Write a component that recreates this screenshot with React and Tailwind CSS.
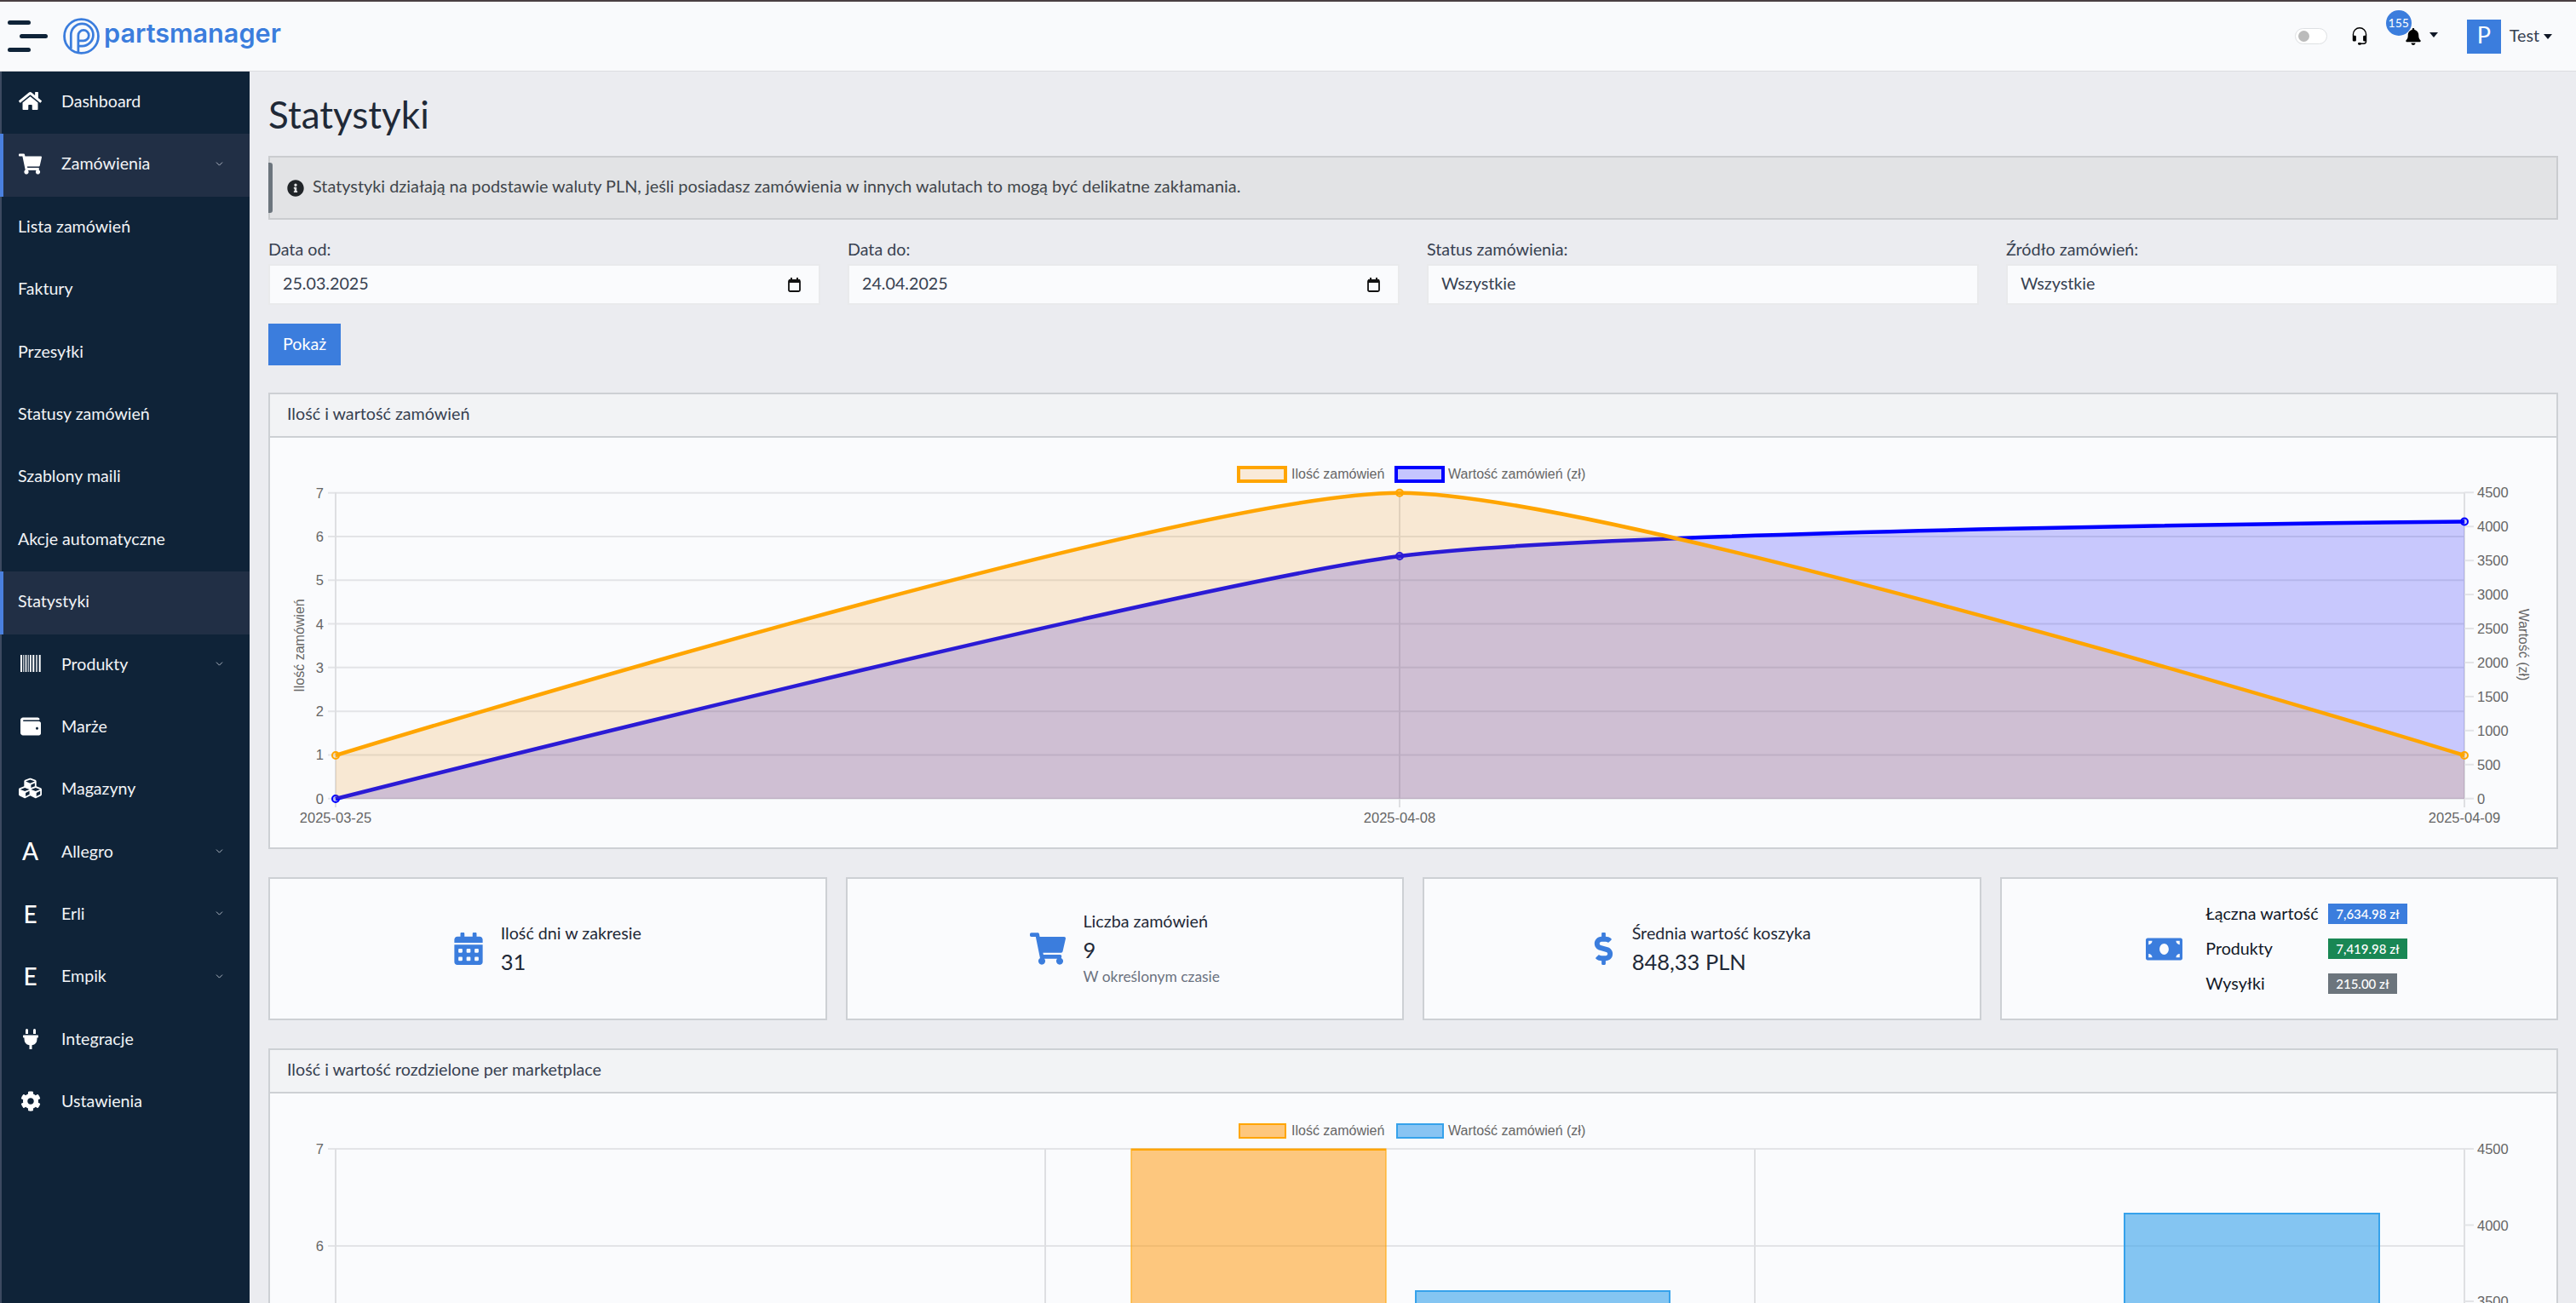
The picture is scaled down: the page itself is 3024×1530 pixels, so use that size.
import { ChevronDown } from "lucide-react";
import { BsHeadset } from "react-icons/bs";
import {
  FaBell,
  FaCalendarAlt,
  FaCog,
  FaCubes,
  FaDollarSign,
  FaHome,
  FaInfoCircle,
  FaMoneyBill,
  FaPlug,
  FaShoppingCart,
  FaWallet,
} from "react-icons/fa";

const barcodeBars = [
  [0, 2],
  [3.3, 1],
  [5.7, 1.6],
  [8.7, 1],
  [11, 1.7],
  [14.3, 2],
  [18.3, 1.4],
  [21.7, 2],
];

function BarcodeIcon() {
  return (
    <svg width="24" height="20" viewBox="0 0 24 20" fill="#fff">
      {barcodeBars.map(([x, w]) => (
        <rect key={x} x={x} y="0" width={w} height="20" />
      ))}
    </svg>
  );
}

const navItems = [
  { name: "Dashboard", icon: <FaHome size={27} /> },
  { name: "Zamówienia", icon: <FaShoppingCart size={27} />, arrow: true, open: true },
  { name: "Lista zamówień", sub: true },
  { name: "Faktury", sub: true },
  { name: "Przesyłki", sub: true },
  { name: "Statusy zamówień", sub: true },
  { name: "Szablony maili", sub: true },
  { name: "Akcje automatyczne", sub: true },
  { name: "Statystyki", sub: true, open: true },
  { name: "Produkty", icon: <BarcodeIcon />, arrow: true },
  { name: "Marże", icon: <FaWallet size={24} /> },
  { name: "Magazyny", icon: <FaCubes size={27} /> },
  { name: "Allegro", letter: "A", arrow: true },
  { name: "Erli", letter: "E", arrow: true },
  { name: "Empik", letter: "E", arrow: true },
  { name: "Integracje", icon: <FaPlug size={24} /> },
  { name: "Ustawienia", icon: <FaCog size={24} /> },
];

const filters = [
  { label: "Data od:", value: "25.03.2025", date: true },
  { label: "Data do:", value: "24.04.2025", date: true },
  { label: "Status zamówienia:", value: "Wszystkie" },
  { label: "Źródło zamówień:", value: "Wszystkie" },
];

const totals = [
  { label: "Łączna wartość", value: "7,634.98 zł", color: "bg-[#3b7ddd]" },
  { label: "Produkty", value: "7,419.98 zł", color: "bg-[#198754]" },
  { label: "Wysyłki", value: "215.00 zł", color: "bg-[#6c757d]" },
];

const chartFont = "Liberation Sans, Arial, sans-serif";
const leftTicks = [7, 6, 5, 4, 3, 2, 1, 0];
const rightTicks = [4500, 4000, 3500, 3000, 2500, 2000, 1500, 1000, 500, 0];

function Caret() {
  return <span className="inline-block border-x-[5px] border-t-[6px] border-x-transparent border-t-[#111827]" />;
}

function Logo() {
  return (
    <svg width="43" height="43" viewBox="45 30 125 125" fill="none" stroke="#3b7ddd" strokeWidth="8">
      <circle cx="107.5" cy="92.5" r="58" />
      <path d="M72 135 V88 A38 38 0 1 1 110 126 H97" />
      <path d="M97 150 V90 A18 18 0 1 1 115 108 H97" />
    </svg>
  );
}

function Header() {
  return (
    <header className="h-[84px] border-t-2 border-b border-t-[#4a3f42] border-b-[#dcdde0] bg-[#f9fafc] flex items-center pl-[9px] pr-[28px]">
      <div className="w-[47px] flex flex-col gap-[11px]">
        <span className="block h-[5px] w-[27px] rounded-full bg-[#0f2338]" />
        <span className="block h-[5px] w-[33px] ml-[14px] rounded-full bg-[#0f2338]" />
        <span className="block h-[5px] w-[27px] rounded-full bg-[#0f2338]" />
      </div>
      <div className="ml-[18px] flex items-center gap-[5px]">
        <Logo />
        <span className="[font-family:Inter,sans-serif] text-[30.6px] leading-none font-semibold text-[#3b7ddd] pb-[6px]">
          partsmanager
        </span>
      </div>
      <div className="ml-auto flex items-center">
        <div className="w-[38px] h-[19px] rounded-full border border-[#dee0e3] bg-white flex items-center pl-[3px]">
          <span className="block w-[13px] h-[13px] rounded-full bg-[#bbbbbb]" />
        </div>
        <BsHeadset size={22} className="ml-[27px] text-black" />
        <div className="relative ml-[42px] flex items-center">
          <FaBell size={20} className="text-black" />
          <span className="absolute -left-[22px] -top-[21px] w-[30px] h-[30px] rounded-full bg-[#3b7ddd] text-white text-[14px] flex items-center justify-center">
            155
          </span>
          <span className="ml-[9px] flex -mt-[3px]">
            <Caret />
          </span>
        </div>
        <div className="ml-[34px] w-[40px] h-[40px] bg-[#3b7ddd] text-white text-[27px] pb-[2px] flex items-center justify-center">
          P
        </div>
        <span className="ml-[10px] pb-[2px] text-[19.7px] text-[#374151]">Test</span>
        <span className="ml-[5px] flex">
          <Caret />
        </span>
      </div>
    </header>
  );
}

function NavRow({ item }) {
  return (
    <li
      className={`h-[73.4px] pb-[4px] flex items-center text-[19.6px] text-[#f1f3f6] ${
        item.open ? "bg-[#212f45] border-l-4 border-[#4a80de] -ml-[2px]" : ""
      } ${item.sub ? (item.open ? "pl-[17px]" : "pl-[19px]") : item.open ? "pl-[18px]" : "pl-[20px]"}`}
    >
      {!item.sub && (
        <span className="w-[27px] flex justify-center text-white text-[28px] font-medium leading-none">
          {item.icon || item.letter}
        </span>
      )}
      <span className={item.sub ? "" : "ml-[23px]"}>{item.name}</span>
      {item.arrow && <ChevronDown size={13} strokeWidth={1.6} className="ml-auto mr-[29px] text-[#c3cad4]" />}
    </li>
  );
}

function Sidebar() {
  return (
    <aside className="w-[293px] shrink-0 bg-[#0f2338] border-l-2 border-[#3c4a60] h-[1446px]">
      <ul>
        {navItems.map((item) => (
          <NavRow key={item.name} item={item} />
        ))}
      </ul>
    </aside>
  );
}

function CalendarIcon() {
  return (
    <svg width="15" height="17" viewBox="0 0 15 17" className="shrink-0">
      <path d="M3 0h2v2h5V0h2v2h2v4H1V2h2z" fill="#111" />
      <rect x="1" y="3" width="13" height="13" rx="1.5" fill="none" stroke="#111" strokeWidth="1.8" />
    </svg>
  );
}

function Filters() {
  return (
    <div className="grid grid-cols-4 gap-x-[32px] mt-[24px]">
      {filters.map((f) => (
        <div key={f.label}>
          <div className="h-[24px] leading-[21px] text-[19.7px] text-[#374151]">{f.label}</div>
          <div className="mt-[4px] h-[48px] border-2 border-[#e9eaec] bg-[#fafbfd] flex items-center justify-between pl-[15px] pr-[21px] text-[19.7px] text-[#374151]">
            <span className="-mt-[3px]">{f.value}</span>
            {f.date && <CalendarIcon />}
          </div>
        </div>
      ))}
    </div>
  );
}

function Card({ title, children }) {
  return (
    <section className="border-2 border-[#cdd0d4] bg-[#fafbfd]">
      <div className="h-[51px] pb-[3px] border-b-2 border-[#cdd0d4] bg-[#f2f3f5] pl-[20px] flex items-center text-[19.7px] text-[#374151]">
        {title}
      </div>
      {children}
    </section>
  );
}

function OrdersChart() {
  const x0 = 394;
  const x1 = 1643;
  const x2 = 2893;
  const yAt = (v) => 937.7 - (v * 359) / 7;
  const rightY = (v) => 937.7 - (v * 359.4) / 4500;
  const orange = "M394 887 C394 887 1393 578.7 1643 578.7 C1893 578.7 2893 887 2893 887";
  const blue = "M394 938 C394 938 1390 686 1643 653 C1890 621 2893 612.5 2893 612.5";
  return (
    <svg viewBox="317 514 2684 481" className="block w-full h-[481px]" fontFamily={chartFont} fontSize="16.5" fill="#666">
      <rect x={1454} y={549} width={55} height={16} fill="#f9ead8" stroke="#ffa500" strokeWidth="4" />
      <text x={1516} y={562} fontSize="16">Ilość zamówień</text>
      <rect x={1639} y={549} width={55} height={16} fill="#c5c5fe" stroke="#0000ff" strokeWidth="4" />
      <text x={1700} y={562} fontSize="16">Wartość zamówień (zł)</text>

      {leftTicks.map((v) => (
        <g key={v}>
          <line x1={385} x2={x2} y1={yAt(v)} y2={yAt(v)} stroke="#e3e4e7" strokeWidth="2" />
          <text x={380} y={yAt(v) + 6} textAnchor="end">{v}</text>
        </g>
      ))}
      {[x0, x1, x2].map((x) => (
        <line key={x} x1={x} x2={x} y1={578} y2={948} stroke="#dedfe2" strokeWidth="2" />
      ))}
      {rightTicks.map((v) => (
        <g key={v}>
          <line x1={x2} x2={2904} y1={rightY(v)} y2={rightY(v)} stroke="#e3e4e7" strokeWidth="2" />
          <text x={2908} y={rightY(v) + 6}>{v}</text>
        </g>
      ))}

      <path d={`${blue} L2893 938 L394 938 Z`} fill="rgba(0,0,255,0.2)" />
      <path d={blue} fill="none" stroke="#0000ff" strokeWidth="4.5" />
      {[[394, 938], [1643, 653], [2893, 612.5]].map(([x, y]) => (
        <circle key={x} cx={x} cy={y} r="4" fill="rgba(0,0,255,0.2)" stroke="#0000ff" strokeWidth="2" />
      ))}
      <path d={`${orange} L2893 938 L394 938 Z`} fill="rgba(240,150,20,0.18)" />
      <path d={orange} fill="none" stroke="#ffa500" strokeWidth="4.5" />
      {[[394, 887], [1643, 578.7], [2893, 887]].map(([x, y]) => (
        <circle key={x} cx={x} cy={y} r="4" fill="rgba(255,165,0,0.2)" stroke="#ffa500" strokeWidth="2" />
      ))}

      <text x={x0} y={966} textAnchor="middle">2025-03-25</text>
      <text x={x1} y={966} textAnchor="middle">2025-04-08</text>
      <text x={x2} y={966} textAnchor="middle">2025-04-09</text>
      <text transform="translate(357 758) rotate(-90)" textAnchor="middle" fontSize="16">Ilość zamówień</text>
      <text transform="translate(2957 757) rotate(90)" textAnchor="middle" fontSize="16">Wartość (zł)</text>
    </svg>
  );
}

function StatCard({ icon, title, value, note }) {
  return (
    <div className="h-[168px] border-2 border-[#cdd0d4] bg-[#fafbfd] flex items-center justify-center gap-[21px]">
      <span className="text-[#3b7ddd]">{icon}</span>
      <div>
        <div className="text-[19.7px] leading-[26px] text-[#1f2937]">{title}</div>
        <div className="mt-[3px] text-[25.5px] leading-[34px] text-[#1f2937]">{value}</div>
        {note && <div className="mt-[3px] text-[17.4px] leading-[24px] text-[#6b7280]">{note}</div>}
      </div>
    </div>
  );
}

function TotalsCard() {
  return (
    <div className="h-[168px] border-2 border-[#cdd0d4] bg-[#fafbfd] flex items-center justify-center gap-[27px]">
      <FaMoneyBill size={43} className="text-[#3b7ddd]" />
      <div className="w-[242px] grid grid-cols-[144px_auto] gap-y-[17px] items-center">
        {totals.map((t) => (
          <div key={t.label} className="contents">
            <span className="text-[19.7px] leading-[24px] text-[#111827]">{t.label}</span>
            <span className="flex">
              <span className={`${t.color} h-[24px] px-[9px] whitespace-nowrap text-white text-[15px] font-medium flex items-center`}>
                {t.value}
              </span>
            </span>
          </div>
        ))}
      </div>
    </div>
  );
}

function MarketplaceChart() {
  const yAt = (v) => 1349 + (7 - v) * 114;
  const rightY = (v) => 1349 + ((4500 - v) * 89.5) / 500;
  return (
    <svg viewBox="317 1284 2684 300" className="block w-full h-[300px]" fontFamily={chartFont} fontSize="16.5" fill="#666">
      <rect x={1455} y={1320} width={54} height={16} fill="#fec77c" stroke="#ffa500" strokeWidth="2" />
      <text x={1516} y={1333} fontSize="16">Ilość zamówień</text>
      <rect x={1640} y={1320} width={54} height={16} fill="#88c4f3" stroke="#36a2eb" strokeWidth="2" />
      <text x={1700} y={1333} fontSize="16">Wartość zamówień (zł)</text>
      {[7, 6].map((v) => (
        <g key={v}>
          <line x1={385} x2={2893} y1={yAt(v)} y2={yAt(v)} stroke="#e3e4e7" strokeWidth="2" />
          <text x={380} y={yAt(v) + 6} textAnchor="end">{v}</text>
        </g>
      ))}
      {[394, 1227, 2060, 2893].map((x) => (
        <line key={x} x1={x} x2={x} y1={1349} y2={1584} stroke="#dedfe2" strokeWidth="2" />
      ))}
      {[4500, 4000, 3500].map((v) => (
        <g key={v}>
          <line x1={2893} x2={2904} y1={rightY(v)} y2={rightY(v)} stroke="#e3e4e7" strokeWidth="2" />
          <text x={2908} y={rightY(v) + 6}>{v}</text>
        </g>
      ))}
      <rect x={1328} y={1349} width={299} height={260} fill="rgba(255,148,0,0.5)" stroke="#ffa500" strokeWidth="1" />
      <rect x={1328} y={1349} width={299} height={2} fill="#ffa500" />
      <rect x={1662} y={1516} width={298} height={100} fill="rgba(54,162,235,0.6)" stroke="#36a2eb" strokeWidth="2" />
      <rect x={2494} y={1425} width={299} height={200} fill="rgba(54,162,235,0.6)" stroke="#36a2eb" strokeWidth="2" />
    </svg>
  );
}

export default function App() {
  return (
    <div className="h-[1530px] overflow-hidden bg-[#ebecf0] [font-family:Lato,sans-serif]">
      <Header />
      <div className="flex">
        <Sidebar />
        <main className="flex-1 min-w-0 pl-[22px] pr-[21px]">
          <h1 className="mt-[20px] h-[60px] leading-[60px] text-[44px] text-[#1f2937]">Statystyki</h1>
          <div className="relative mt-[19px] h-[75px] border-2 border-[#cacccf] bg-[#e2e3e5] pl-[20px] flex items-center gap-[10px] text-[19.85px] text-[#41464b]">
            <span className="absolute -left-[2px] top-[6px] bottom-[6px] w-[5px] rounded-r-[3px] bg-[#6c757d]" />
            <FaInfoCircle size={20} className="text-[#212529]" />
            <span className="-mt-[3px]">
              Statystyki działają na podstawie waluty PLN, jeśli posiadasz zamówienia w innych walutach to mogą być delikatne zakłamania.
            </span>
          </div>
          <Filters />
          <button className="block mt-[22px] h-[49px] w-[85px] pb-[2px] bg-[#3b7ddd] text-white text-[19.7px]">Pokaż</button>
          <div className="mt-[32px]">
            <Card title="Ilość i wartość zamówień">
              <OrdersChart />
            </Card>
          </div>
          <div className="mt-[33px] grid grid-cols-4 gap-x-[22px]">
            <StatCard icon={<FaCalendarAlt size={38} className="w-[34px]" />} title="Ilość dni w zakresie" value="31" />
            <StatCard icon={<FaShoppingCart size={42} />} title="Liczba zamówień" value="9" note="W określonym czasie" />
            <StatCard icon={<FaDollarSign size={38} className="w-[25px]" />} title="Średnia wartość koszyka" value="848,33 PLN" />
            <TotalsCard />
          </div>
          <div className="mt-[33px]">
            <Card title="Ilość i wartość rozdzielone per marketplace">
              <MarketplaceChart />
            </Card>
          </div>
        </main>
      </div>
    </div>
  );
}
